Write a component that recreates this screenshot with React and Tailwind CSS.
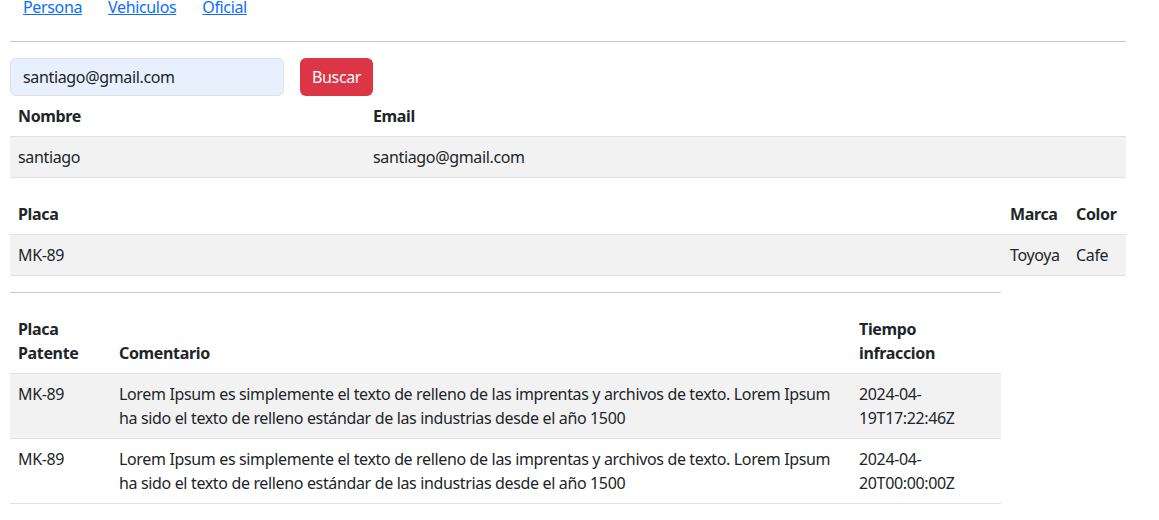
export default function App() {
  const lorem =
    "Lorem Ipsum es simplemente el texto de relleno de las imprentas y archivos de texto. Lorem Ipsum ha sido el texto de relleno estándar de las industrias desde el año 1500";
  const rows = [
    { placa: "MK-89", time: "2024-04-19T17:22:46Z" },
    { placa: "MK-89", time: "2024-04-20T00:00:00Z" },
  ];
  return (
    <div
      className="w-[1159px] h-[520px] overflow-hidden bg-white text-[#212529] text-[16px] leading-[24px] tracking-[-0.35px]"
      style={{ fontFamily: '"Noto Sans", "Open Sans", sans-serif' }}
    >
      <div className="ml-[10px] w-[1116px] -mt-[5px]">
        <nav className="flex pl-[13px] gap-[26px]">
          <a href="#" className="text-[#0d6efd] underline">Persona</a>
          <a href="#" className="text-[#0d6efd] underline">Vehiculos</a>
          <a href="#" className="text-[#0d6efd] underline">Oficial</a>
        </nav>
        <hr className="mt-[22px] mb-[16px] border-0 border-t border-[#c8c8c8]" />
        <div className="flex gap-[16px]">
          <input
            readOnly
            value="santiago@gmail.com"
            className="w-[274px] h-[38px] px-[12px] rounded-[6px] border border-[#dee2e6] bg-[#e8f0fe] text-[#212529] outline-none tracking-[-0.35px]"
          />
          <button className="h-[38px] px-[12px] rounded-[6px] bg-[#dc3545] text-white">Buscar</button>
        </div>

        <table className="w-full mb-[16px] table-fixed">
          <colgroup>
            <col className="w-[355px]" />
            <col />
          </colgroup>
          <thead>
            <tr className="border-b border-[#dee2e6]">
              <th className="text-left font-bold p-[8px]">Nombre</th>
              <th className="text-left font-bold p-[8px]">Email</th>
            </tr>
          </thead>
          <tbody>
            <tr className="border-b border-[#dee2e6] bg-[#f2f2f2]">
              <td className="p-[8px]">santiago</td>
              <td className="p-[8px]">santiago@gmail.com</td>
            </tr>
          </tbody>
        </table>

        <table className="w-full mb-[16px] table-fixed">
          <colgroup>
            <col />
            <col className="w-[66px]" />
            <col className="w-[58px]" />
          </colgroup>
          <thead>
            <tr className="border-b border-[#dee2e6]">
              <th className="text-left font-bold p-[8px]">Placa</th>
              <th className="text-left font-bold p-[8px]">Marca</th>
              <th className="text-left font-bold p-[8px]">Color</th>
            </tr>
          </thead>
          <tbody>
            <tr className="border-b border-[#dee2e6] bg-[#f2f2f2]">
              <td className="p-[8px]">MK-89</td>
              <td className="p-[8px]">Toyoya</td>
              <td className="p-[8px]">Cafe</td>
            </tr>
          </tbody>
        </table>

        <div className="w-[991px]">
          <hr className="mb-[16px] border-0 border-t border-[#c8c8c8]" />
          <table className="w-full table-fixed">
            <colgroup>
              <col className="w-[101px]" />
              <col className="w-[740px]" />
              <col className="w-[150px]" />
            </colgroup>
            <thead>
              <tr className="border-b border-[#dee2e6]">
                <th className="text-left align-bottom font-bold p-[8px]">Placa Patente</th>
                <th className="text-left align-bottom font-bold p-[8px]">Comentario</th>
                <th className="text-left align-bottom font-bold p-[8px] pr-[40px]">Tiempo infraccion</th>
              </tr>
            </thead>
            <tbody>
              {rows.map((r, i) => (
                <tr key={i} className={"border-b border-[#dee2e6] " + (i === 0 ? "bg-[#f2f2f2]" : "")}>
                  <td className="p-[8px] align-top">{r.placa}</td>
                  <td className="p-[8px] pr-[16px] align-top">{lorem}</td>
                  <td className="p-[8px] pr-[30px] align-top">{r.time}</td>
                </tr>
              ))}
            </tbody>
          </table>
        </div>
      </div>
    </div>
  );
}
